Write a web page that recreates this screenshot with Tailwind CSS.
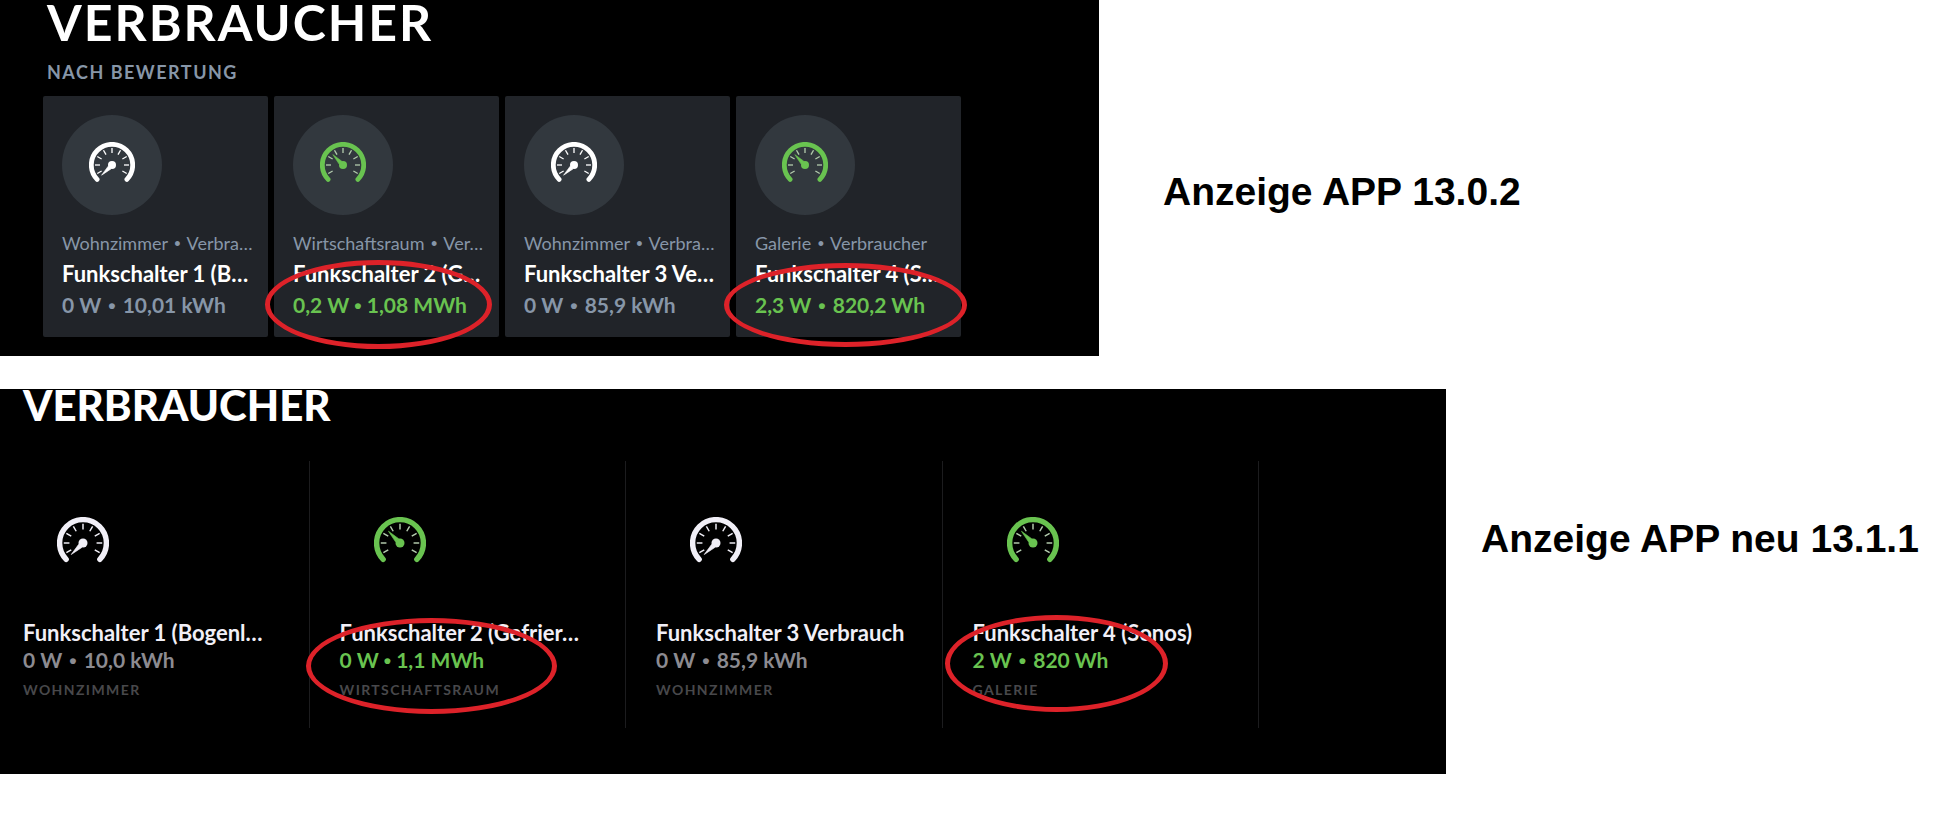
<!DOCTYPE html>
<html lang="de">
<head>
    <meta charset="UTF-8">
    <meta name="viewport" content="width=device-width, initial-scale=1.0">
    <title>Verbraucher</title>
    <script src="https://cdn.jsdelivr.net/npm/@tailwindcss/browser@4"></script>
</head>
<body class="bg-white font-['Lato',sans-serif]">
    <!-- Zähler-Symbol, Nadel unten (aus) und oben (aktiv) -->
    <svg class="hidden">
        <symbol id="dial" viewBox="-23 -23 46 46">
            <path d="M-14.9 14.4A20.7 20.7 0 1 1 14.9 14.4" fill="none" stroke="currentColor" stroke-width="4.8" stroke-linecap="round"/>
            <g stroke-width="1.3">
                <path d="M0 -17V-12"/>
                <path d="M0 -17V-12" transform="rotate(30)"/>
                <path d="M0 -17V-12" transform="rotate(60)"/>
                <path d="M0 -17V-12" transform="rotate(90)"/>
                <path d="M0 -17V-12" transform="rotate(120)"/>
                <path d="M0 -17V-12" transform="rotate(-30)"/>
                <path d="M0 -17V-12" transform="rotate(-60)"/>
                <path d="M0 -17V-12" transform="rotate(-90)"/>
                <path d="M0 -17V-12" transform="rotate(-120)"/>
            </g>
        </symbol>
        <symbol id="needle" viewBox="-23 -23 46 46">
            <circle r="4" fill="currentColor"/>
            <path d="M-10.4 10.2L-3.8 1.2L-1 3.9Z" fill="currentColor" stroke="currentColor" stroke-width=".6" stroke-linejoin="round"/>
        </symbol>
        <symbol id="gauge-off" viewBox="-23 -23 46 46">
            <use href="#dial" x="-23" y="-23" width="46" height="46" stroke="currentColor"/>
            <use href="#needle" x="-23" y="-23" width="46" height="46"/>
        </symbol>
        <symbol id="gauge-on" viewBox="-23 -23 46 46">
            <use href="#dial" x="-23" y="-23" width="46" height="46" stroke="#b4ccae"/>
            <use href="#needle" x="-23" y="-23" width="46" height="46" transform="rotate(90)"/>
        </symbol>
    </svg>

    <main class="flex flex-col gap-[33px]">
        <!-- App 13.0.2 -->
        <div class="flex items-start">
            <section class="w-[56.65%] shrink-0 bg-black pl-[43px] pr-[138px] pb-[19px]">
                <h2 class="pl-1 text-[50px] leading-[44px] font-bold tracking-[2px] text-white">VERBRAUCHER</h2>
                <p class="pl-1 pt-4 pb-3 text-lg leading-6 font-bold tracking-[1.5px] text-[#8796a8]">NACH BEWERTUNG</p>
                <div class="grid grid-cols-4 gap-[6px] whitespace-nowrap">
                    <article class="relative rounded-xs bg-[#212429] p-[19px]">
                        <div class="flex size-[100px] items-center justify-center rounded-full bg-[#32383e] text-white">
                            <svg class="size-[46px]"><use href="#gauge-off"/></svg>
                        </div>
                        <p class="pt-4 text-lg leading-6 text-[#8796a8]">Wohnzimmer <span class="mx-[2px] font-['Liberation_Sans']">•</span> Verbra…</p>
                        <h3 class="pt-[6px] text-[22px] leading-6 font-bold text-white">Funkschalter 1 (B…</h3>
                        <p class="pt-[7px] text-[21px] leading-6 font-bold text-[#8796a8]">0 W <span class="mx-[2px] font-['Liberation_Sans']">•</span> 10,01 kWh</p>
                    </article>
                    <article class="relative rounded-xs bg-[#212429] p-[19px]">
                        <div class="flex size-[100px] items-center justify-center rounded-full bg-[#32383e] text-[#69c350]">
                            <svg class="size-[46px]"><use href="#gauge-on"/></svg>
                        </div>
                        <p class="pt-4 text-lg leading-6 text-[#8796a8]">Wirtschaftsraum <span class="mx-[2px] font-['Liberation_Sans']">•</span> Ver…</p>
                        <h3 class="pt-[6px] text-[22px] leading-6 font-bold text-white">Funkschalter 2 (G…</h3>
                        <p class="pt-[7px] text-[21px] leading-6 font-bold text-[#69c350]">0,2 W <span class="font-['Liberation_Sans']">•</span> 1,08 MWh</p>
                        <div class="absolute -left-[9px] top-[164px] z-10 h-[89px] w-[227px] rounded-[50%] border-5 border-[#dd2229]"></div>
                    </article>
                    <article class="relative rounded-xs bg-[#212429] p-[19px]">
                        <div class="flex size-[100px] items-center justify-center rounded-full bg-[#32383e] text-white">
                            <svg class="size-[46px]"><use href="#gauge-off"/></svg>
                        </div>
                        <p class="pt-4 text-lg leading-6 text-[#8796a8]">Wohnzimmer <span class="mx-[2px] font-['Liberation_Sans']">•</span> Verbra…</p>
                        <h3 class="pt-[6px] text-[22px] leading-6 font-bold text-white">Funkschalter 3 Ve…</h3>
                        <p class="pt-[7px] text-[21px] leading-6 font-bold text-[#8796a8]">0 W <span class="mx-[2px] font-['Liberation_Sans']">•</span> 85,9 kWh</p>
                    </article>
                    <article class="relative rounded-xs bg-[#212429] p-[19px]">
                        <div class="flex size-[100px] items-center justify-center rounded-full bg-[#32383e] text-[#69c350]">
                            <svg class="size-[46px]"><use href="#gauge-on"/></svg>
                        </div>
                        <p class="pt-4 text-lg leading-6 text-[#8796a8]">Galerie <span class="mx-[2px] font-['Liberation_Sans']">•</span> Verbraucher</p>
                        <h3 class="pt-[6px] text-[22px] leading-6 font-bold text-white">Funkschalter 4 (S…</h3>
                        <p class="pt-[7px] text-[21px] leading-6 font-bold text-[#69c350]">2,3 W <span class="mx-[2px] font-['Liberation_Sans']">•</span> 820,2 Wh</p>
                        <div class="absolute -left-[12px] top-[167px] z-10 h-[84px] w-[243px] rounded-[50%] border-5 border-[#dd2229]"></div>
                    </article>
                </div>
            </section>
            <p class="pl-16 pt-[168px] font-['Liberation_Sans',sans-serif] text-[39px] leading-12 font-bold whitespace-nowrap text-black">Anzeige APP 13.0.2</p>
        </div>

        <!-- App 13.1.1 -->
        <div class="flex items-start">
            <section class="w-[74.54%] shrink-0 bg-black pl-[23px] pr-[187px] pb-[46px]">
                <h2 class="text-[42px] leading-8 font-black text-white">VERBRAUCHER</h2>
                <div class="mt-10 grid grid-cols-4 gap-x-[30px] whitespace-nowrap">
                    <article class="relative border-r border-[#1c1c1e] pt-14 pb-[26px]">
                        <div class="pl-[34px] text-[#f1eff7]">
                            <svg class="size-[52px]"><use href="#gauge-off"/></svg>
                        </div>
                        <h3 class="pt-[50px] text-[22px] leading-7 font-bold text-[#f1eff7]">Funkschalter 1 (Bogenl…</h3>
                        <p class="text-[21px] leading-[26px] font-bold text-[#8c8b91]">0 W <span class="mx-[2px] font-['Liberation_Sans']">•</span> 10,0 kWh</p>
                        <p class="pt-1 text-sm leading-6 font-bold tracking-widest text-[#48484b]">WOHNZIMMER</p>
                    </article>
                    <article class="relative border-r border-[#1c1c1e] pt-14 pb-[26px]">
                        <div class="pl-[34px] text-[#69c350]">
                            <svg class="size-[52px]"><use href="#gauge-on"/></svg>
                        </div>
                        <h3 class="pt-[50px] text-[22px] leading-7 font-bold text-[#f1eff7]">Funkschalter 2 (Gefrier…</h3>
                        <p class="text-[21px] leading-[26px] font-bold text-[#69c350]">0 W <span class="font-['Liberation_Sans']">•</span> 1,1 MWh</p>
                        <p class="pt-1 text-sm leading-6 font-bold tracking-widest text-[#48484b]">WIRTSCHAFTSRAUM</p>
                        <div class="absolute -left-[34px] top-[157px] z-10 h-[96px] w-[251px] rounded-[50%] border-5 border-[#dd2229]"></div>
                    </article>
                    <article class="relative border-r border-[#1c1c1e] pt-14 pb-[26px]">
                        <div class="pl-[34px] text-[#f1eff7]">
                            <svg class="size-[52px]"><use href="#gauge-off"/></svg>
                        </div>
                        <h3 class="pt-[50px] text-[22px] leading-7 font-bold text-[#f1eff7]">Funkschalter 3 Verbrauch</h3>
                        <p class="text-[21px] leading-[26px] font-bold text-[#8c8b91]">0 W <span class="mx-[2px] font-['Liberation_Sans']">•</span> 85,9 kWh</p>
                        <p class="pt-1 text-sm leading-6 font-bold tracking-widest text-[#48484b]">WOHNZIMMER</p>
                    </article>
                    <article class="relative border-r border-[#1c1c1e] pt-14 pb-[26px]">
                        <div class="pl-[34px] text-[#69c350]">
                            <svg class="size-[52px]"><use href="#gauge-on"/></svg>
                        </div>
                        <h3 class="pt-[50px] text-[22px] leading-7 font-bold text-[#f1eff7]">Funkschalter 4 (Sonos)</h3>
                        <p class="text-[21px] leading-[26px] font-bold text-[#69c350]">2 W <span class="mx-[2px] font-['Liberation_Sans']">•</span> 820 Wh</p>
                        <p class="pt-1 text-sm leading-6 font-bold tracking-widest text-[#48484b]">GALERIE</p>
                        <div class="absolute -left-[28px] top-[154px] z-10 h-[97px] w-[223px] rounded-[50%] border-5 border-[#dd2229]"></div>
                    </article>
                </div>
            </section>
            <p class="pl-[35px] pt-[126px] font-['Liberation_Sans',sans-serif] text-[39px] leading-12 font-bold whitespace-nowrap text-black">Anzeige APP neu 13.1.1</p>
        </div>
    </main>
</body>
</html>
